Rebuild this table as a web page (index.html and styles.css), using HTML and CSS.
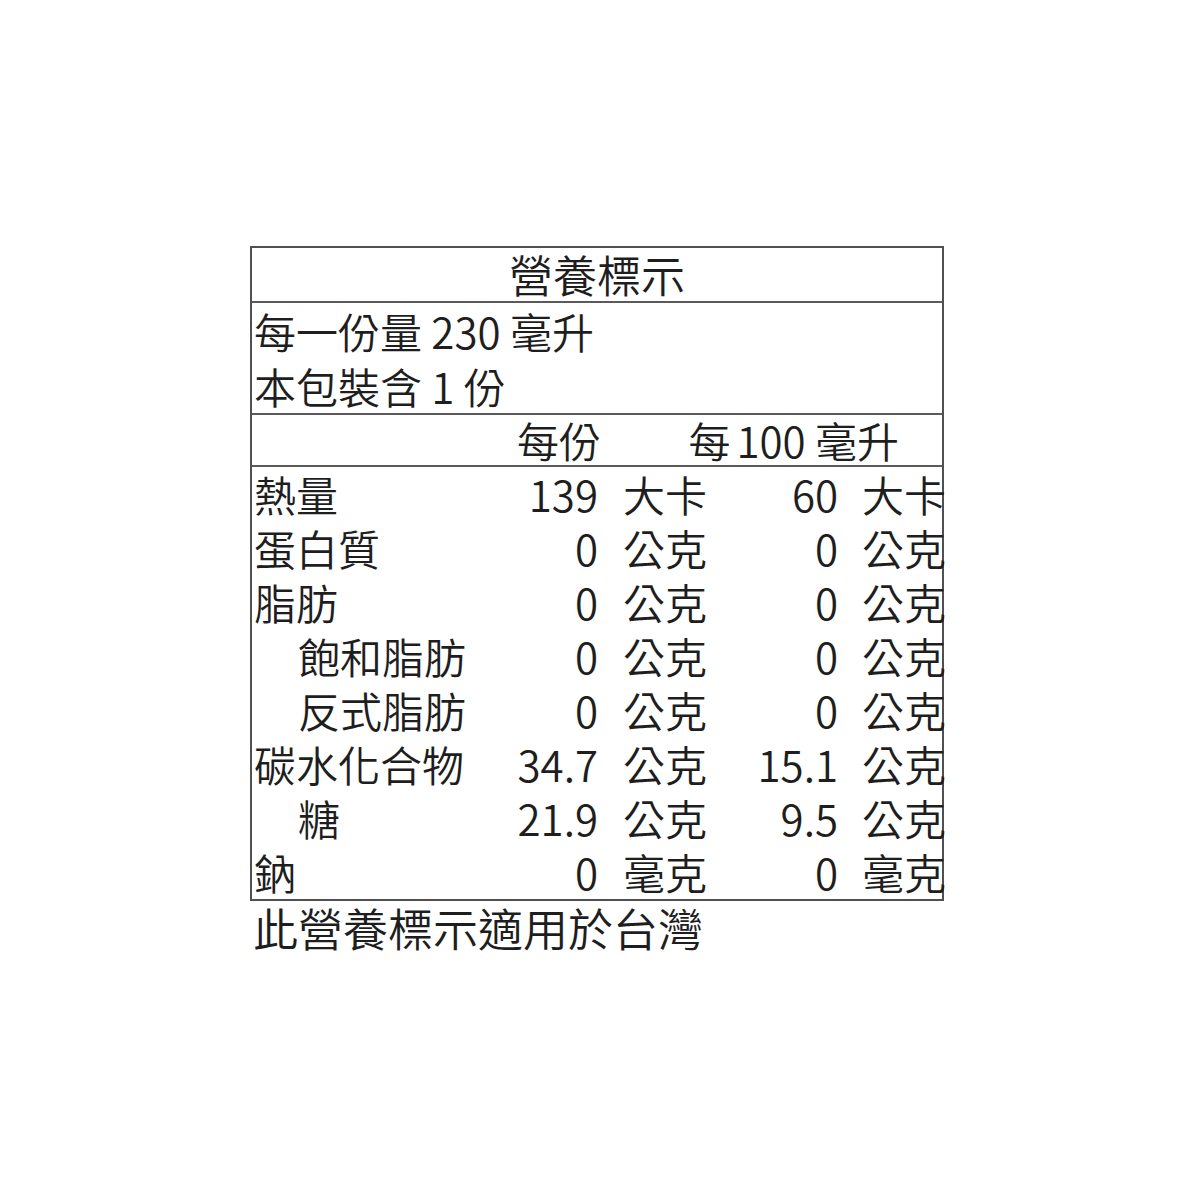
FILE: index.html
```html
<!DOCTYPE html>
<html lang="zh-Hant">
<head>
<meta charset="utf-8">
<title>營養標示</title>
<link rel="stylesheet" href="styles.css">
</head>
<body>
<div class="page">
  <div class="label">
    <div class="title">營養標示</div>
    <div class="serving">
      <div class="line">每一份量 230 毫升</div>
      <div class="line">本包裝含 1 份</div>
    </div>
    <div class="head">
      <span class="per-serving">每份</span>
      <span class="per-100"><span class="each">每</span>100 毫升</span>
    </div>
    <div class="body">
      <div class="row"><span class="name">熱量</span><span class="num">139</span><span class="unit">大卡</span><span class="num">60</span><span class="unit u2">大卡</span></div>
      <div class="row"><span class="name">蛋白質</span><span class="num">0</span><span class="unit">公克</span><span class="num">0</span><span class="unit u2">公克</span></div>
      <div class="row"><span class="name">脂肪</span><span class="num">0</span><span class="unit">公克</span><span class="num">0</span><span class="unit u2">公克</span></div>
      <div class="row"><span class="name sub">飽和脂肪</span><span class="num">0</span><span class="unit">公克</span><span class="num">0</span><span class="unit u2">公克</span></div>
      <div class="row"><span class="name sub">反式脂肪</span><span class="num">0</span><span class="unit">公克</span><span class="num">0</span><span class="unit u2">公克</span></div>
      <div class="row"><span class="name">碳水化合物</span><span class="num">34.7</span><span class="unit">公克</span><span class="num">15.1</span><span class="unit u2">公克</span></div>
      <div class="row"><span class="name sub">糖</span><span class="num">21.9</span><span class="unit">公克</span><span class="num">9.5</span><span class="unit u2">公克</span></div>
      <div class="row"><span class="name">鈉</span><span class="num">0</span><span class="unit">毫克</span><span class="num">0</span><span class="unit u2">毫克</span></div>
    </div>
  </div>
  <div class="note">此營養標示適用於台灣</div>
</div>
</body>
</html>
```

FILE: styles.css
```css
html, body {
  margin: 0;
  padding: 0;
  background: #ffffff;
}

body {
  font-family: "Noto Sans CJK TC", "Noto Sans CJK SC", sans-serif;
  font-weight: 350;
  color: #1e1e1e;
}

.page {
  padding: 246px 0 0 250px;
}

.label {
  box-sizing: border-box;
  width: 694px;
  border: 2px solid #505050;
}

.title {
  height: 53px;
  line-height: 53px;
  font-size: 44px;
  text-align: center;
  border-bottom: 2px solid #5a5a5a;
}

.serving {
  border-bottom: 2px solid #5a5a5a;
  padding-left: 2px;
}

.serving .line {
  height: 55px;
  line-height: 55px;
  font-size: 42px;
  white-space: nowrap;
}

.head {
  display: grid;
  grid-template-columns: 347px 344px;
  height: 50px;
  line-height: 50px;
  font-size: 42px;
  padding-left: 2px;
  border-bottom: 2px solid #5a5a5a;
  white-space: nowrap;
}

.per-serving {
  text-align: right;
}

.per-100 {
  text-align: right;
  padding-right: 46px;
}

.each {
  margin-right: 6px;
}

.body {
  padding-left: 2px;
}

.row {
  display: grid;
  grid-template-columns: 200px 144px 105px 135px 105px;
  height: 54px;
  line-height: 54px;
  font-size: 42px;
  white-space: nowrap;
}

.name.sub {
  padding-left: 44px;
}

.num {
  text-align: right;
}

.unit {
  padding-left: 25px;
}

.unit.u2 {
  padding-left: 24px;
}

.note {
  padding-left: 3px;
  height: 56px;
  line-height: 54px;
  font-size: 45px;
  white-space: nowrap;
}
```
